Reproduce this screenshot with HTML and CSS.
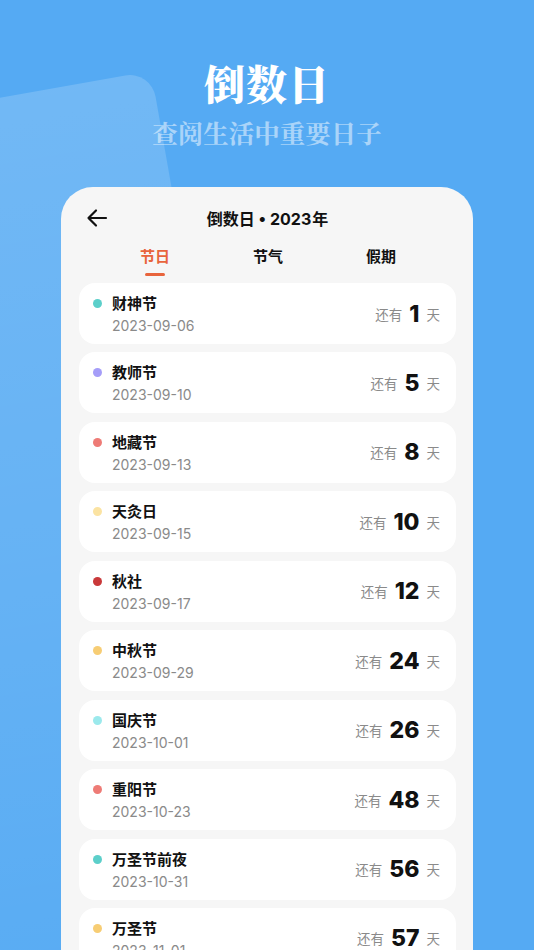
FILE: index.html
```html
<!DOCTYPE html>
<html lang="zh">
<head>
<meta charset="utf-8">
<link rel="stylesheet" href="styles.css">
</head>
<body>
<div class="page">
  <div class="deco"></div>
  <header class="hero">
    <h1 class="hero-title">倒数日</h1>
    <p class="hero-sub">查阅生活中重要日子</p>
  </header>
  <section class="card">
    <div class="card-head">
      <svg class="back" width="24" height="24" viewBox="0 0 24 24" fill="none" stroke="#111" stroke-width="2.2" stroke-linecap="round" stroke-linejoin="round"><path d="M21 12H3.5M11 4.5L3.5 12L11 19.5"/></svg>
      <div class="card-title">倒数日<span class="latin"> • 2023</span>年</div>
    </div>
    <nav class="tabs">
      <div class="tab active">节日</div>
      <div class="tab">节气</div>
      <div class="tab">假期</div>
    </nav>
    <ul class="list">
      <li class="item"><span class="dot c-teal"></span><div class="info"><div class="name">财神节</div><div class="date">2023-09-06</div></div><div class="left"><span class="lbl">还有</span><span class="num">1</span><span class="lbl">天</span></div></li>
      <li class="item"><span class="dot c-purple"></span><div class="info"><div class="name">教师节</div><div class="date">2023-09-10</div></div><div class="left"><span class="lbl">还有</span><span class="num">5</span><span class="lbl">天</span></div></li>
      <li class="item"><span class="dot c-coral"></span><div class="info"><div class="name">地藏节</div><div class="date">2023-09-13</div></div><div class="left"><span class="lbl">还有</span><span class="num">8</span><span class="lbl">天</span></div></li>
      <li class="item"><span class="dot c-cream"></span><div class="info"><div class="name">天灸日</div><div class="date">2023-09-15</div></div><div class="left"><span class="lbl">还有</span><span class="num">10</span><span class="lbl">天</span></div></li>
      <li class="item"><span class="dot c-red"></span><div class="info"><div class="name">秋社</div><div class="date">2023-09-17</div></div><div class="left"><span class="lbl">还有</span><span class="num">12</span><span class="lbl">天</span></div></li>
      <li class="item"><span class="dot c-yellow"></span><div class="info"><div class="name">中秋节</div><div class="date">2023-09-29</div></div><div class="left"><span class="lbl">还有</span><span class="num">24</span><span class="lbl">天</span></div></li>
      <li class="item"><span class="dot c-cyan"></span><div class="info"><div class="name">国庆节</div><div class="date">2023-10-01</div></div><div class="left"><span class="lbl">还有</span><span class="num">26</span><span class="lbl">天</span></div></li>
      <li class="item"><span class="dot c-coral"></span><div class="info"><div class="name">重阳节</div><div class="date">2023-10-23</div></div><div class="left"><span class="lbl">还有</span><span class="num">48</span><span class="lbl">天</span></div></li>
      <li class="item"><span class="dot c-teal"></span><div class="info"><div class="name">万圣节前夜</div><div class="date">2023-10-31</div></div><div class="left"><span class="lbl">还有</span><span class="num">56</span><span class="lbl">天</span></div></li>
      <li class="item"><span class="dot c-yellow"></span><div class="info"><div class="name">万圣节</div><div class="date">2023-11-01</div></div><div class="left"><span class="lbl">还有</span><span class="num">57</span><span class="lbl">天</span></div></li>
    </ul>
  </section>
</div>
</body>
</html>
```

FILE: styles.css
```css
* { box-sizing: border-box; }
html, body { margin: 0; padding: 0; }
body {
  width: 534px;
  height: 950px;
  overflow: hidden;
  background: #55aaf3;
  font-family: "Noto Sans CJK SC", "Noto Sans", sans-serif;
}
.page {
  position: relative;
  width: 534px;
  height: 950px;
  overflow: hidden;
  display: flex;
  flex-direction: column;
  align-items: center;
}
.deco {
  position: absolute;
  left: -249px;
  top: 71px;
  width: 400px;
  height: 900px;
  border-radius: 0 26px 0 0;
  transform-origin: top right;
  transform: rotate(-10deg);
  background: linear-gradient(180deg, rgba(255,255,255,0.17) 0%, rgba(255,255,255,0.1) 50%, rgba(255,255,255,0.02) 100%);
}
.hero {
  position: relative;
  display: flex;
  flex-direction: column;
  align-items: center;
  padding-top: 57px;
}
.hero-title {
  margin: 0;
  font-family: "Noto Serif CJK SC", "Noto Sans CJK SC", serif;
  font-weight: 900;
  font-size: 41px;
  line-height: 52px;
  color: #fff;
  letter-spacing: 1px;
}
.hero-sub {
  margin: 6px 0 0;
  font-family: "Noto Serif CJK SC", "Noto Sans CJK SC", serif;
  font-weight: 700;
  font-size: 25.5px;
  line-height: 34px;
  color: rgba(255,255,255,0.5);
}
.card {
  position: relative;
  margin-top: 38px;
  width: 412px;
  flex: 1;
  background: #f6f6f6;
  border-radius: 32px 32px 0 0;
  padding: 0 17px 0 18px;
}
.card-head {
  position: relative;
  height: 62px;
  display: flex;
  align-items: center;
  justify-content: center;
}
.back {
  position: absolute;
  left: 6px;
  top: 19px;
}
.card-title {
  font-size: 16px;
  font-weight: 700;
  color: #111;
  margin-top: 0;
}
.latin {
  font-family: "Inter", "Noto Sans", sans-serif;
  font-weight: 700;
  margin-right: 1px;
}
.tabs {
  display: flex;
  justify-content: space-between;
  padding: 0 60px 0 61px;
  height: 34px;
}
.tab {
  position: relative;
  font-size: 15px;
  font-weight: 700;
  color: #111;
  line-height: 14px;
}
.tab.active { color: #e8643c; }
.tab.active::after {
  content: "";
  position: absolute;
  left: 50%;
  top: 24px;
  width: 20px;
  height: 3px;
  margin-left: -10px;
  border-radius: 2px;
  background: #e8643c;
}
.list {
  list-style: none;
  margin: 0;
  padding: 0;
  display: flex;
  flex-direction: column;
  gap: 8.44px;
}
.item {
  height: 61px;
  background: #fff;
  border-radius: 16px;
  display: flex;
  align-items: flex-start;
  padding: 0 16px 0 14px;
}
.dot {
  width: 9px;
  height: 9px;
  border-radius: 50%;
  margin-top: 16px;
  flex: none;
}
.info {
  margin-left: 10px;
  padding-top: 10px;
  flex: 1;
}
.name {
  font-size: 15px;
  font-weight: 700;
  color: #111;
  line-height: 20px;
}
.date {
  font-family: "Inter", "Noto Sans CJK SC", sans-serif;
  font-size: 14px;
  color: #8a8a8a;
  line-height: 18px;
  margin-top: 4px;
}
.left {
  align-self: center;
  display: flex;
  align-items: center;
  gap: 7px;
}
.lbl {
  font-size: 13.5px;
  color: #8a8a8a;
}
.num {
  font-family: "Inter", "Noto Sans", sans-serif;
  font-size: 23px;
  font-weight: 800;
  color: #111;
  line-height: 28px;
}
.c-teal { background: #5ccfca; }
.c-purple { background: #a59df8; }
.c-coral { background: #ee7b76; }
.c-cream { background: #fbe3a2; }
.c-red { background: #c9393a; }
.c-yellow { background: #f7cd74; }
.c-cyan { background: #9be9ec; }
```
